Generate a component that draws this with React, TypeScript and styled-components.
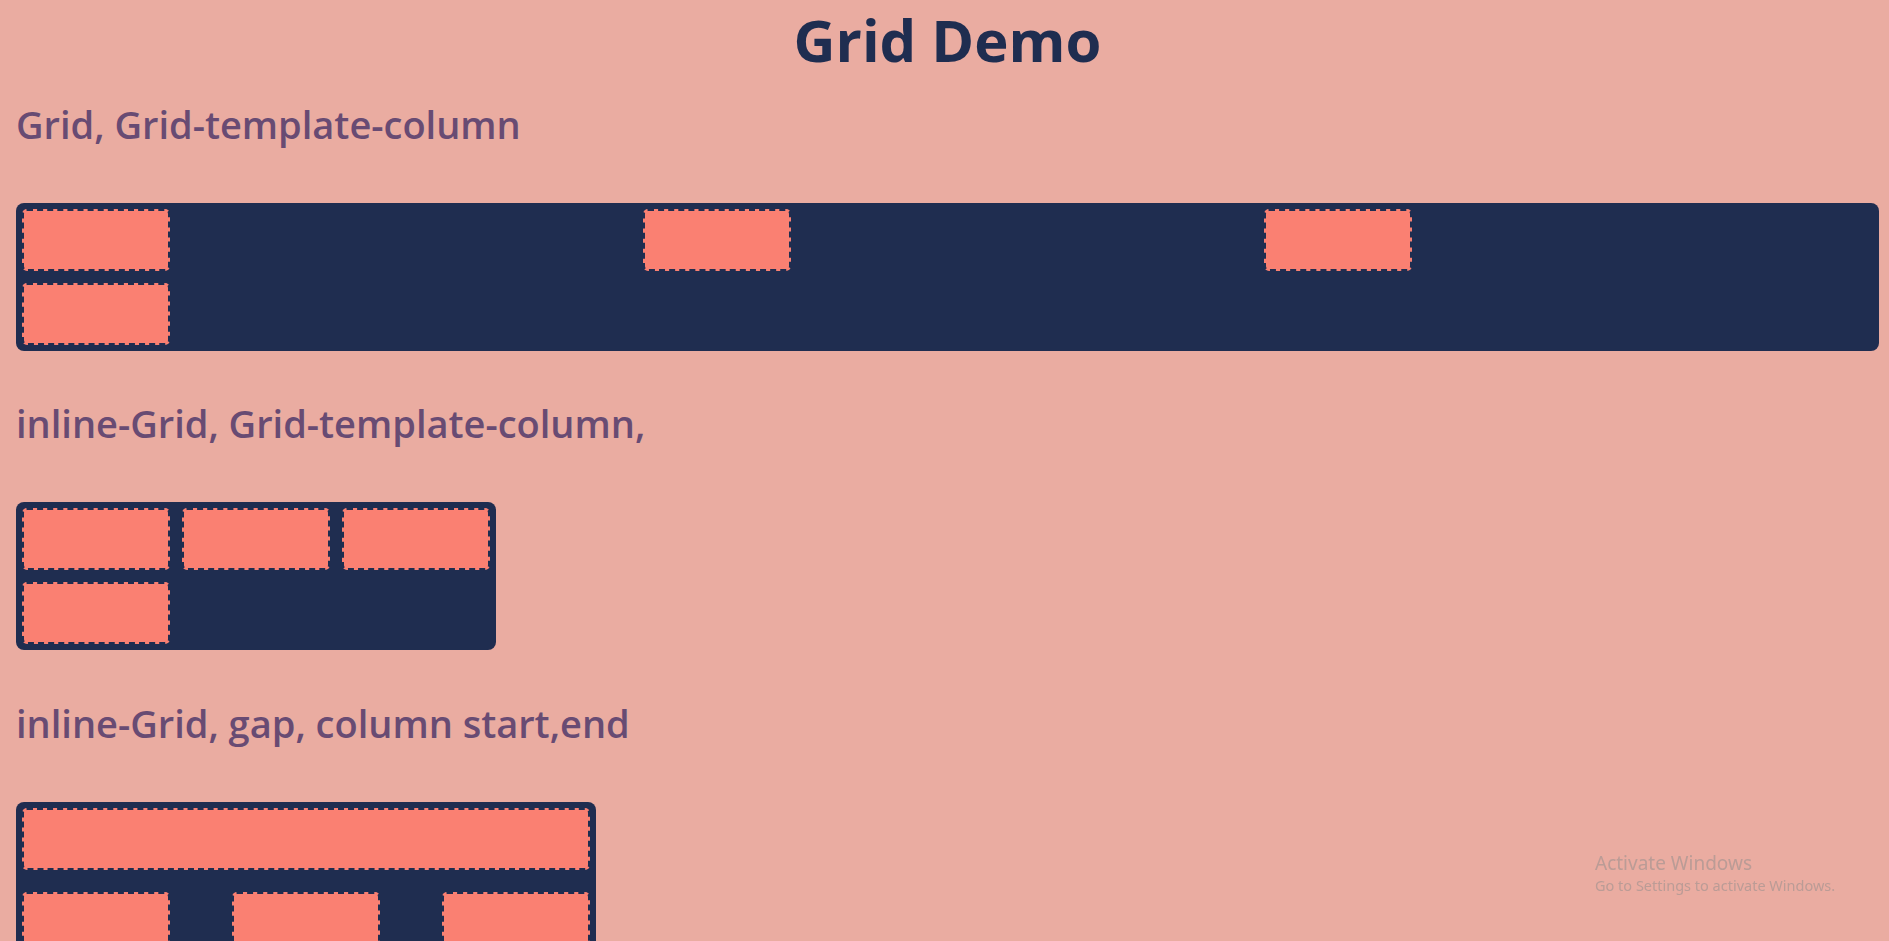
import styled, { createGlobalStyle } from 'styled-components';

const GlobalStyle = createGlobalStyle`
    html, body {
        margin: 0;
        padding: 0;
        background: #eaaca1;
    }
    body {
        font-family: 'Open Sans', 'Noto Sans', sans-serif;
        overflow: hidden;
    }
`

const Page = styled.div`
    padding: 0 10px 0 16px;
    height: 941px;
    box-sizing: border-box;
`
const Title = styled.h1`
    margin: 0;
    text-align: center;
    font-size: 58px;
    line-height: 80px;
    font-weight: 700;
    color: #1f2d50;
`
const Heading = styled.h2`
    margin: 0;
    font-size: 38px;
    line-height: 48px;
    font-weight: 600;
    color: #684b73;
`
const Section = styled.section<{ $top: number }>`
    margin-top: ${({ $top }) => $top}px;
    display: flex;
    flex-direction: column;
    align-items: flex-start;
    gap: 55px;
`
const Grid = styled.div<{ $inline?: boolean; $gap?: string }>`
    display: grid;
    align-self: ${({ $inline }) => ($inline ? 'flex-start' : 'stretch')};
    grid-template-columns: ${({ $inline }) => ($inline ? 'repeat(3, auto)' : 'repeat(3, 1fr)')};
    gap: ${({ $gap }) => $gap || '0'};
    background: #1f2d50;
    border-radius: 8px;
`
const Item = styled.div<{ $wide?: boolean }>`
    width: ${({ $wide }) => ($wide ? 'auto' : '148px')};
    height: 62px;
    margin: 6px;
    box-sizing: border-box;
    background: #fa8072;
    border: 2px dashed #1f2d50;
    border-radius: 5px;
    grid-column: ${({ $wide }) => ($wide ? '1 / 4' : 'auto')};
`
const Watermark = styled.div`
    position: fixed;
    left: 1595px;
    top: 852px;
    color: rgba(140, 140, 140, 0.5);
    font-family: 'Noto Sans', sans-serif;
    line-height: 1.2;
    pointer-events: none;
`
const WatermarkTitle = styled.div`
    font-size: 19px;
`
const WatermarkText = styled.div`
    font-size: 14.5px;
    margin-top: 2px;
`

function App() {
    return (
        <>
            <GlobalStyle />
            <Page>
                <Title>Grid Demo</Title>
                <Section $top={20}>
                    <Heading>Grid, Grid-template-column</Heading>
                    <Grid>
                        {[1, 2, 3, 4].map((n) => <Item key={n} />)}
                    </Grid>
                </Section>
                <Section $top={48}>
                    <Heading>inline-Grid, Grid-template-column,</Heading>
                    <Grid $inline>
                        {[1, 2, 3, 4].map((n) => <Item key={n} />)}
                    </Grid>
                </Section>
                <Section $top={49}>
                    <Heading>inline-Grid, gap, column start,end</Heading>
                    <Grid $inline $gap="10px 50px">
                        <Item $wide />
                        {[1, 2, 3, 4].map((n) => <Item key={n} />)}
                    </Grid>
                </Section>
            </Page>
            <Watermark>
                <WatermarkTitle>Activate Windows</WatermarkTitle>
                <WatermarkText>Go to Settings to activate Windows.</WatermarkText>
            </Watermark>
        </>
    )
}

export default App;
